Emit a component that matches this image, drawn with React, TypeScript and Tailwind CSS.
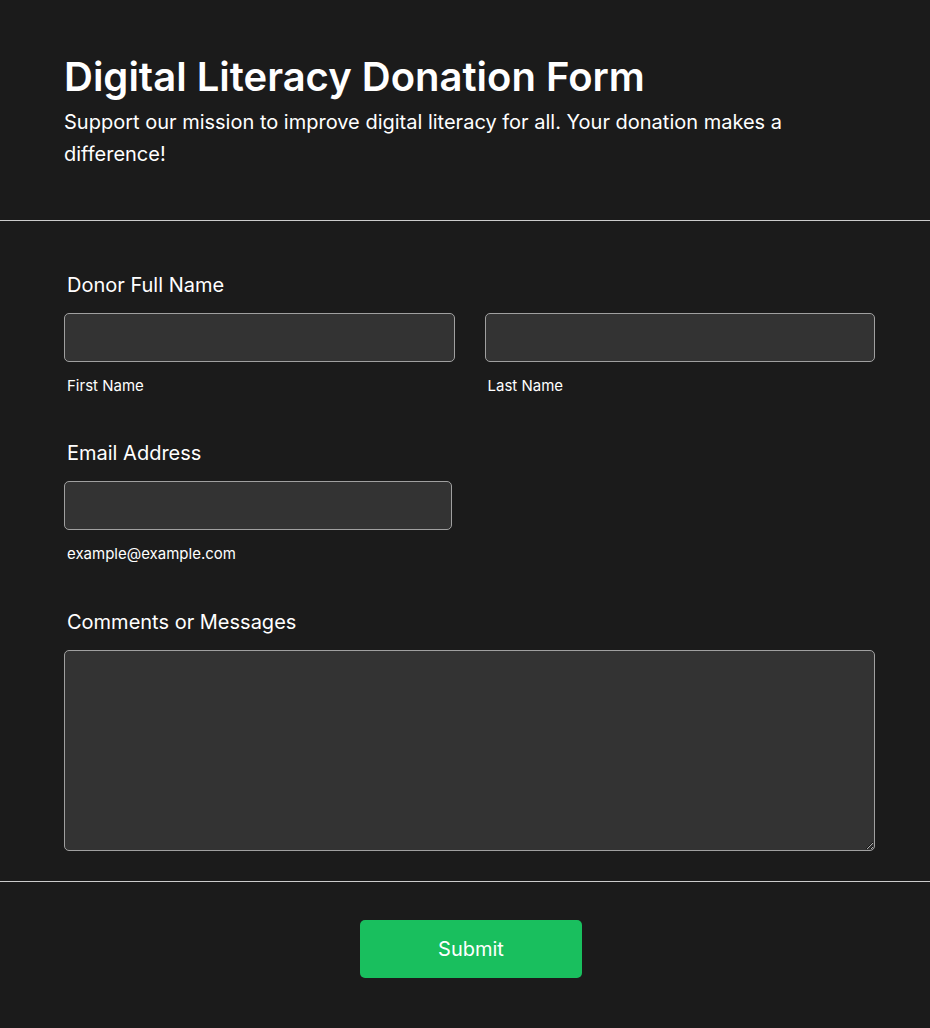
export default function App() {
  return (
    <div className="min-h-screen bg-[#1b1b1b] text-white font-['Inter',sans-serif]">
      <header className="px-16 pt-[53px] pb-[50px] border-b border-[#cccccc]">
        <h1 className="text-[40px] leading-[48px] font-semibold">Digital Literacy Donation Form</h1>
        <p className="mt-[5px] text-xl leading-8">
          Support our mission to improve digital literacy for all. Your donation makes a difference!
        </p>
      </header>

      <form className="pl-16 pr-[55px] pt-[50px] pb-[30px] border-b border-[#cccccc]">
        <div className="mb-[43px]">
          <label className="block pl-[3px] text-xl leading-7">Donor Full Name</label>
          <div className="mt-[14px] flex gap-[30px]">
            <div className="flex-1">
              <input className="block w-full h-[49px] rounded-[5px] border border-[#a0a0a0] bg-[#333333] px-3 text-white outline-none" />
              <span className="block mt-[14px] pl-[3px] text-[15px] leading-5">First Name</span>
            </div>
            <div className="flex-1">
              <input className="block w-full h-[49px] rounded-[5px] border border-[#a0a0a0] bg-[#333333] px-3 text-white outline-none" />
              <span className="block mt-[14px] pl-[3px] text-[15px] leading-5">Last Name</span>
            </div>
          </div>
        </div>

        <div className="mb-[44px]">
          <label className="block pl-[3px] text-xl leading-7">Email Address</label>
          <div className="mt-[14px] w-[388px]">
            <input type="email" className="block w-full h-[49px] rounded-[5px] border border-[#a0a0a0] bg-[#333333] px-3 text-white outline-none" />
            <span className="block mt-[14px] pl-[3px] text-[15px] leading-5">example@example.com</span>
          </div>
        </div>

        <div>
          <label className="block pl-[3px] text-xl leading-7">Comments or Messages</label>
          <textarea className="mt-[14px] block w-full h-[201px] rounded-[5px] border border-[#a0a0a0] bg-[#333333] px-3 py-2 text-white outline-none" />
        </div>
      </form>

      <div className="flex justify-center pl-16 pr-[52px] pt-[38px] pb-[50px]">
        <button type="button" className="w-[222px] h-[58px] rounded-[5px] bg-[#19bf5e] text-xl text-white">
          Submit
        </button>
      </div>
    </div>
  );
}
